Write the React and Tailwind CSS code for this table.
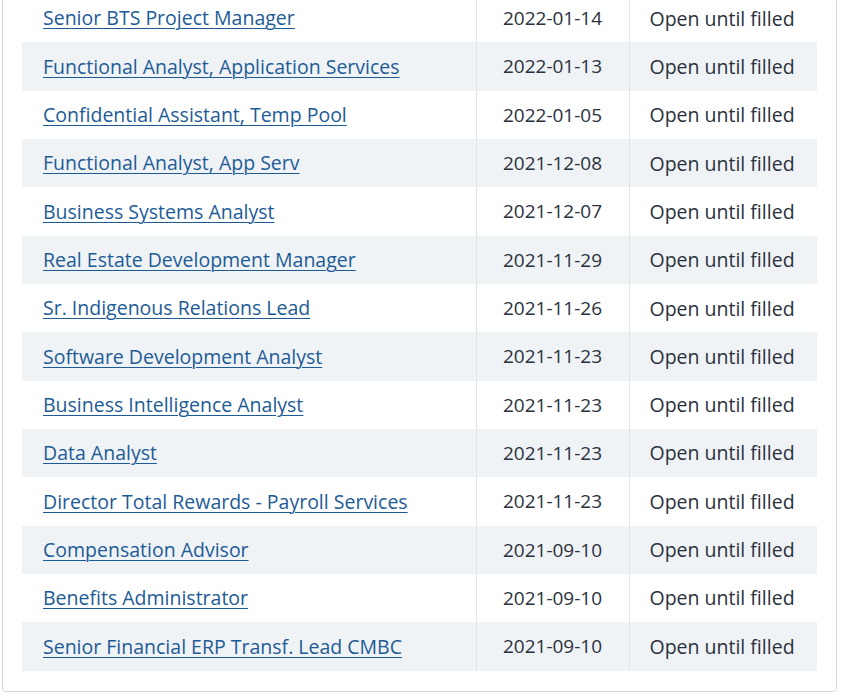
import React from "react";

const jobs = [
  ["Senior BTS Project Manager", "2022-01-14"],
  ["Functional Analyst, Application Services", "2022-01-13"],
  ["Confidential Assistant, Temp Pool", "2022-01-05"],
  ["Functional Analyst, App Serv", "2021-12-08"],
  ["Business Systems Analyst", "2021-12-07"],
  ["Real Estate Development Manager", "2021-11-29"],
  ["Sr. Indigenous Relations Lead", "2021-11-26"],
  ["Software Development Analyst", "2021-11-23"],
  ["Business Intelligence Analyst", "2021-11-23"],
  ["Data Analyst", "2021-11-23"],
  ["Director Total Rewards - Payroll Services", "2021-11-23"],
  ["Compensation Advisor", "2021-09-10"],
  ["Benefits Administrator", "2021-09-10"],
  ["Senior Financial ERP Transf. Lead CMBC", "2021-09-10"],
];

const App = () => {
  return (
    <div className="min-h-screen bg-white overflow-hidden" style={{ fontFamily: "'Open Sans', 'Noto Sans', sans-serif" }}>
      {/* Job postings card */}
      <div className="mx-[2px] -mt-[26px] w-[835px] border border-[#d3d8de] rounded-[4px] px-[19px] pt-[19px] pb-[20px] bg-white">
        <table className="w-[795px] border-collapse table-fixed">
          <colgroup>
            <col className="w-[454px]" />
            <col className="w-[153px]" />
            <col />
          </colgroup>
          <tbody>
            {jobs.map(([title, date], i) => (
              <tr key={title} className={`h-[48.33px] ${i % 2 === 1 ? "bg-[#f0f3f6]" : "bg-white"}`}>
                <td className="pl-[21px] text-[19.5px] leading-none">
                  <a href="#" className="text-[#1d5b96] underline underline-offset-[3px] decoration-1">
                    {title}
                  </a>
                </td>
                <td className="border-x border-[#e1e5e9] text-center text-[19px] text-[#2a313c]">{date}</td>
                <td className="pl-[20px] text-[19.5px] text-[#2a313c]">Open until filled</td>
              </tr>
            ))}
          </tbody>
        </table>
      </div>
    </div>
  );
};

export default App;
